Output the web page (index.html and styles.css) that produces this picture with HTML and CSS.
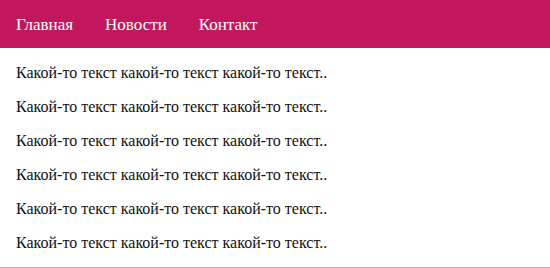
FILE: index.html
```html
<!DOCTYPE html>
<html lang="ru">
<head>
<meta charset="utf-8">
<title>Страница</title>
<link rel="stylesheet" href="styles.css">
</head>
<body class="page">
<header class="topbar">
  <nav class="nav">
    <a class="nav-link" href="#">Главная</a>
    <a class="nav-link" href="#">Новости</a>
    <a class="nav-link" href="#">Контакт</a>
  </nav>
</header>
<main class="content">
  <p class="text">Какой-то текст какой-то текст какой-то текст..</p>
  <p class="text">Какой-то текст какой-то текст какой-то текст..</p>
  <p class="text">Какой-то текст какой-то текст какой-то текст..</p>
  <p class="text">Какой-то текст какой-то текст какой-то текст..</p>
  <p class="text">Какой-то текст какой-то текст какой-то текст..</p>
  <p class="text">Какой-то текст какой-то текст какой-то текст..</p>
</main>
<div class="bottom-line"></div>
</body>
</html>
```
FILE: styles.css
```css
.page {
  margin: 0;
  padding: 0;
  background: #fff;
  font-family: "Liberation Serif", serif;
  font-size: 16px;
  color: #111;
}
.topbar {
  background: #c2185b;
  height: 48px;
  display: flex;
  align-items: center;
  padding-top: 1px;
  box-sizing: border-box;
}
.nav {
  display: flex;
}
.nav-link {
  color: #fff;
  text-decoration: none;
  padding: 0 16px;
  font-size: 17px;
}
.content {
  padding: 0 16px;
}
.text {
  margin: 16px 0;
}
.bottom-line {
  position: fixed;
  left: 0;
  right: 0;
  bottom: 0;
  height: 1px;
  background: #d9a3b8;
}
```
